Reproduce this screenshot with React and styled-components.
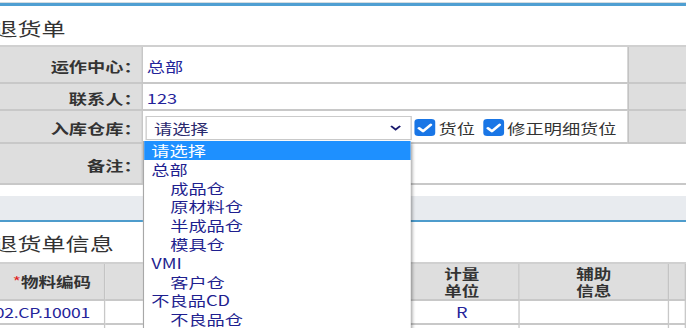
import styled, { createGlobalStyle } from 'styled-components';

const GlobalStyle = createGlobalStyle`
  html, body {
    margin: 0;
    padding: 0;
    background: #fff;
    overflow: hidden;
  }
  body {
    font-family: "Noto Sans CJK SC", "Noto Sans", sans-serif;
    font-size: 14px;
    color: #333;
  }
`;

// the screenshot is stretched horizontally, so the page is laid out narrow and widened
const Stage = styled.div`
  position: relative;
  width: 528px;
  transform: scaleX(1.2992);
  transform-origin: 0 0;
`;

const TopRule = styled.div`
  margin-top: 2px;
  border-top: 1px solid #d3dbe0;
  height: 3px;
  background: #4f9fd2;
`;

const PageTitle = styled.h2`
  margin: 0;
  height: ${(p) => p.$h}px;
  display: flex;
  align-items: center;
  padding-top: ${(p) => p.$pt || 0}px;
  box-sizing: border-box;
  text-indent: -5px;
  font-size: 18.5px;
  font-weight: 400;
  color: #333;
  white-space: nowrap;
`;

const FormGrid = styled.div`
  display: grid;
  grid-template-columns: 110px 1fr 45px;
  grid-template-rows: 37px 27px 33px 41px;
  border-top: 2px solid #d0d0d0;
`;

const Label = styled.div`
  background: #dedede;
  border-right: 1.5px solid #c4c4c4;
  border-bottom: 2px solid #c8c8c8;
  display: flex;
  align-items: center;
  justify-content: flex-end;
  padding-top: 2px;
  box-sizing: border-box;
  font-weight: 700;
  color: #333;
  white-space: nowrap;
`;

const Value = styled.div`
  grid-column: ${(p) => (p.$wide ? '2 / 4' : 'auto')};
  border-bottom: 2px solid #c8c8c8;
  display: flex;
  align-items: center;
  padding: 2px 0 0 3px;
  box-sizing: border-box;
  color: #24249a;
  white-space: nowrap;
`;

const Filler = styled.div`
  background: #dedede;
  border-left: 1.5px solid #bdbdbd;
  border-bottom: 2px solid #c8c8c8;
`;

const SelectBox = styled.div`
  width: 205px;
  height: 24px;
  margin-left: -1.5px;
  box-sizing: border-box;
  border: 1px solid #cbcbcb;
  background: #fff;
  display: flex;
  align-items: center;
  justify-content: space-between;
  padding: 0 7px 0 6px;
  color: #2a2a6e;
`;

const CheckLabel = styled.label`
  display: flex;
  align-items: center;
  gap: 3px;
  margin-left: ${(p) => p.$ml}px;
  color: #333;
`;

const CheckBox = styled.span`
  width: 16px;
  height: 17px;
  border-radius: 3px;
  background: #1976e6;
  display: flex;
  align-items: center;
  justify-content: center;
`;

const BandGap = styled.div`
  height: 11px;
`;

const Band = styled.div`
  height: 24px;
  background: #e8ebef;
  border-bottom: 2px solid #4e9ccc;
`;

const DetailGrid = styled.div`
  display: grid;
  grid-template-columns: 81px 231px 88px 115px 1fr;
  grid-template-rows: 37px 24px 10px;
  border-top: 2px solid #d0d0d0;
`;

const HeadCell = styled.div`
  background: #dedede;
  border-right: 1.5px solid #c4c4c4;
  border-bottom: 2px solid #c8c8c8;
  display: flex;
  flex-direction: column;
  align-items: center;
  justify-content: center;
  text-align: center;
  font-size: 13.5px;
  font-weight: 700;
  line-height: 17px;
  color: #333;
`;

const Star = styled.span`
  color: #e02020;
  font-weight: 400;
`;

const DataCell = styled.div`
  border-right: 1.5px solid #c8c8c8;
  border-bottom: 2px solid #c8c8c8;
  display: flex;
  align-items: center;
  justify-content: ${(p) => (p.$left ? 'flex-start' : 'center')};
  overflow: hidden;
  white-space: nowrap;
  color: #24249a;
  font-size: 14px;
`;

const Code = styled.span`
  margin-left: -4px;
  font-size: 13.5px;
  letter-spacing: -0.2px;
`;

const Dropdown = styled.ul`
  position: absolute;
  left: 110px;
  top: 139px;
  width: 206px;
  margin: 0;
  padding: 0;
  list-style: none;
  background: #fff;
  border-left: 1px solid #a8a8a8;
  box-shadow: 2px 2px 3px rgba(0, 0, 0, 0.4);
  box-sizing: border-box;
`;

const Option = styled.li`
  height: 18.8px;
  line-height: 18.8px;
  padding-left: ${(p) => (p.$sub ? 20 : 5.5)}px;
  background: ${(p) => (p.$active ? '#1e90ff' : '#fff')};
  color: ${(p) => (p.$active ? '#fff' : '#1f1f8f')};
  white-space: nowrap;
`;

const options = [
  { text: '请选择', active: true },
  { text: '总部' },
  { text: '成品仓', sub: true },
  { text: '原材料仓', sub: true },
  { text: '半成品仓', sub: true },
  { text: '模具仓', sub: true },
  { text: 'VMI' },
  { text: '客户仓', sub: true },
  { text: '不良品CD' },
  { text: '不良品仓', sub: true },
];

const Tick = () => (
  <svg width="12" height="10" viewBox="0 0 12 10">
    <path d="M1.5 5.2 L4.6 8.2 L10.6 1.8" fill="none" stroke="#fff" strokeWidth="2.3" strokeLinecap="round" strokeLinejoin="round" />
  </svg>
);

const Chevron = () => (
  <svg width="9" height="6" viewBox="0 0 9 6">
    <path d="M1 1 L4.5 4.6 L8 1" fill="none" stroke="#1a1a6e" strokeWidth="1.7" />
  </svg>
);

export default function App() {
  return (
    <>
      <GlobalStyle />
      <Stage>
        <TopRule />
        <PageTitle $h={39} $pt={4}>退货单</PageTitle>

        <FormGrid>
          <Label>运作中心：</Label>
          <Value>总部</Value>
          <Filler />

          <Label>联系人：</Label>
          <Value>123</Value>
          <Filler />

          <Label>入库仓库：</Label>
          <Value>
            <SelectBox>
              <span>请选择</span>
              <Chevron />
            </SelectBox>
            <CheckLabel $ml={2}>
              <CheckBox>
                <Tick />
              </CheckBox>
              货位
            </CheckLabel>
            <CheckLabel $ml={6}>
              <CheckBox>
                <Tick />
              </CheckBox>
              修正明细货位
            </CheckLabel>
          </Value>
          <Filler />

          <Label>备注：</Label>
          <Value $wide />
        </FormGrid>

        <BandGap />
        <Band />
        <PageTitle $h={40} $pt={2}>退货单信息</PageTitle>

        <DetailGrid>
          <HeadCell>
            <span>
              <Star>*</Star>物料编码
            </span>
          </HeadCell>
          <HeadCell>物料名称</HeadCell>
          <HeadCell>
            <span>计量</span>
            <span>单位</span>
          </HeadCell>
          <HeadCell>
            <span>辅助</span>
            <span>信息</span>
          </HeadCell>
          <HeadCell />

          <DataCell $left>
            <Code>02.CP.10001</Code>
          </DataCell>
          <DataCell />
          <DataCell>R</DataCell>
          <DataCell />
          <DataCell />

          <DataCell />
          <DataCell />
          <DataCell />
          <DataCell />
          <DataCell />
        </DetailGrid>

        <Dropdown>
          {options.map((o) => (
            <Option key={o.text} $sub={o.sub} $active={o.active}>
              {o.text}
            </Option>
          ))}
        </Dropdown>
      </Stage>
    </>
  );
}
